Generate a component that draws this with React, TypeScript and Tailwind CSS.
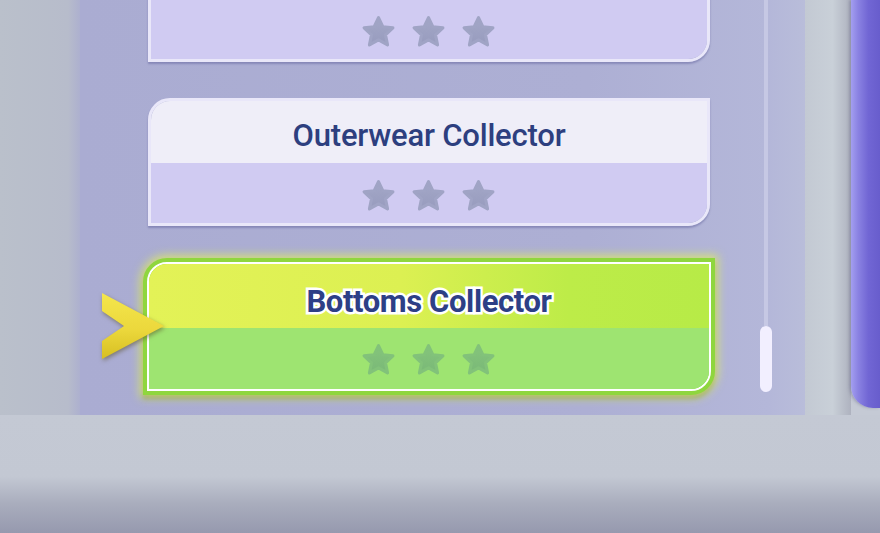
import React from 'react'

// Badge list screen: two plain cards, one selected card with a pointer, scrollbar and side tab.

const Star = ({ selected }: { selected?: boolean }) => (
  <svg width="35" height="33" viewBox="0 0 34 32">
    <defs>
      <linearGradient id={selected ? 'starG' : 'starL'} x1="0" y1="0" x2="0" y2="1">
        <stop offset="0" stopColor={selected ? '#86c57c' : '#a4a8c8'} />
        <stop offset="1" stopColor={selected ? '#79b877' : '#979bbd'} />
      </linearGradient>
    </defs>
    <path
      d="M17 2.5 L21.2 11.4 L31 12.5 L23.8 19.2 L25.8 29 L17 24.1 L8.2 29 L10.2 19.2 L3 12.5 L12.8 11.4 Z"
      fill={`url(#${selected ? 'starG' : 'starL'})`}
      stroke={selected ? '#82c27a' : '#a0a4c5'}
      strokeWidth="3"
      strokeLinejoin="round"
    />
  </svg>
)

const Stars = ({ selected }: { selected?: boolean }) => (
  <div className="flex items-center justify-center gap-[15px] pr-[2px]">
    <Star selected={selected} />
    <Star selected={selected} />
    <Star selected={selected} />
  </div>
)

const Card = ({ title, className = '' }: { title?: string; className?: string }) => (
  <div
    className={`h-[128px] w-[562px] shrink-0 rounded-tl-[22px] rounded-br-[22px] border-[3px] border-[#e9e7f9] overflow-hidden flex flex-col shadow-[0_2px_2px_rgba(90,90,150,0.45)] ${className}`}
  >
    <div className="h-[62px] bg-[#efeef8] flex items-center justify-center pt-[9px]">
      {title && (
        <span className="text-[31px] font-medium text-[#2d3f7f] tracking-[-0.2px] font-['Roboto',sans-serif]">
          {title}
        </span>
      )}
    </div>
    <div className="flex-1 bg-[#d0cbf2] flex items-center justify-center pt-[4px]">
      <Stars />
    </div>
  </div>
)

const SelectedCard = ({ title }: { title: string }) => (
  <div className="relative -mx-[5px] h-[137px] w-[572px] shrink-0 rounded-tl-[24px] rounded-br-[24px] border-[4px] border-[#8fd63e] bg-[#8fd63e] shadow-[0_0_10px_3px_rgba(225,240,90,0.75),0_4px_4px_rgba(90,110,60,0.5)]">
    <div className="h-full rounded-tl-[20px] rounded-br-[20px] border-2 border-white overflow-hidden flex flex-col">
      <div className="h-[64px] bg-[linear-gradient(90deg,#e3f257_0%,#dcf052_45%,#bdec48_75%,#b7eb47_100%)] flex items-center justify-center">
        <span className="text-[31px] font-bold text-[#2d3f86] tracking-[-0.4px] font-['Roboto',sans-serif] [paint-order:stroke_fill] [-webkit-text-stroke:5px_#ffffff] pt-[12px]">
          {title}
        </span>
      </div>
      <div className="flex-1 bg-[#9ee471] flex items-center justify-center pt-[2px]">
        <Stars selected />
      </div>
    </div>
    {/* pointer */}
    <svg
      className="absolute left-[-47px] top-[29px] drop-shadow-[1px_2px_2px_rgba(90,80,40,0.55)]"
      width="66"
      height="70"
      viewBox="0 0 66 70"
    >
      <defs>
        <linearGradient id="arrowG" x1="0" y1="0" x2="0" y2="1">
          <stop offset="0" stopColor="#f4e64c" />
          <stop offset="0.55" stopColor="#ecd83c" />
          <stop offset="1" stopColor="#d7bf22" />
        </linearGradient>
      </defs>
      <polygon points="2,2 64,35 2,68 2,50 24,35 2,20" fill="url(#arrowG)" />
    </svg>
  </div>
)

export default function App() {
  return (
    <div className="w-[880px] h-[533px] overflow-hidden flex flex-col bg-[#c5cad5]">
      <div className="h-[415px] flex shrink-0">
        {/* left backdrop */}
        <div className="w-[80px] shrink-0 bg-[linear-gradient(90deg,#bac0cb_0%,#b7bccb_85%,#adb0cf_100%)]" />

        {/* list panel */}
        <div className="w-[725px] shrink-0 flex bg-[linear-gradient(90deg,#aaacd2_0%,#adafd4_70%,#b4b7d9_95%,#b9bdda_100%)] overflow-hidden">
          <div className="ml-[68px] -mt-[66px] flex flex-col gap-[36px]">
            <Card />
            <Card title="Outerwear Collector" />
            <div className="-mt-[4px]">
              <SelectedCard title="Bottoms Collector" />
            </div>
          </div>

          {/* scrollbar */}
          <div className="ml-[50px] w-[12px] flex flex-col items-center">
            <div className="w-[4px] h-[326px] bg-[#c6c8e4]" />
            <div className="w-[12px] h-[66px] rounded-full bg-[#f2efff]" />
          </div>
        </div>

        {/* gap between panel and tab */}
        <div className="flex-1 bg-[linear-gradient(90deg,#c3c9d3_0%,#c9d0d8_60%,#aeb2bf_100%)]" />

        {/* purple side tab */}
        <div className="w-[29px] h-[408px] shrink-0 rounded-bl-[22px] bg-[linear-gradient(90deg,#a39ef0_0%,#8a82e2_25%,#7166d4_60%,#685dcc_100%)] shadow-[-2px_0_3px_rgba(90,90,120,0.35)]" />
      </div>

      {/* floor */}
      <div className="flex-1 bg-[linear-gradient(180deg,#c4c9d4_0%,#c3c8d3_52%,#a9adbd_75%,#9699ae_100%)]" />
    </div>
  )
}
